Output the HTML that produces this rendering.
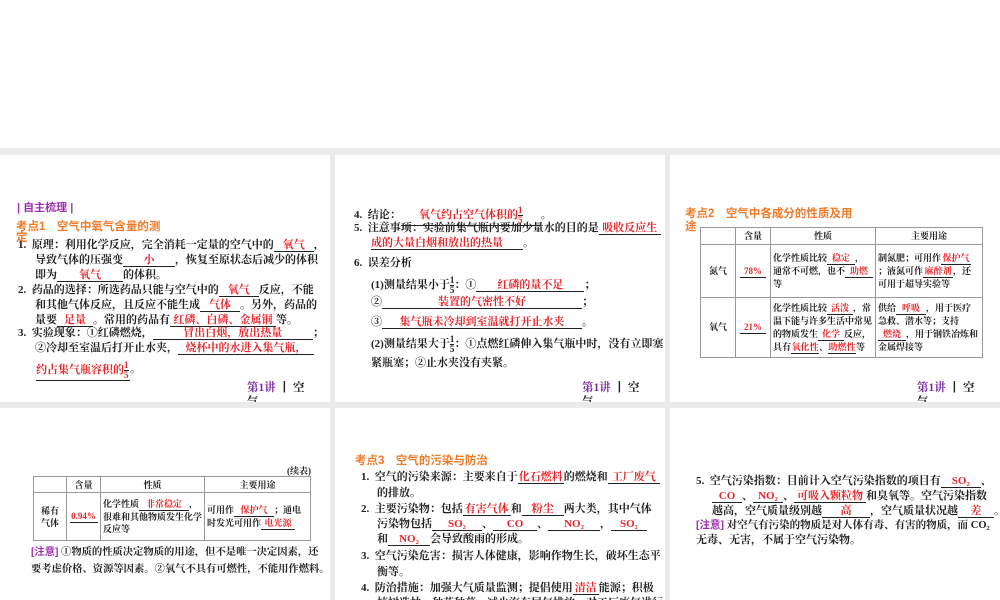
<!DOCTYPE html>
<html><head><meta charset="utf-8">
<style>
*{margin:0;padding:0;box-sizing:border-box}
body{width:1000px;height:600px;background:#fff;position:relative;overflow:hidden;font-family:"Liberation Serif","Noto Serif CJK SC",serif;font-size:11px;color:#222;font-weight:bold}
.bg{position:absolute;left:0;top:148px;width:1000px;height:452px;background:#ebebeb}
.p{position:absolute;background:#fff;overflow:hidden}
.l{position:absolute;white-space:nowrap;line-height:14px}
.b{display:inline-block;border-bottom:1px solid #222;text-align:center;color:#e8262a;line-height:12px}
.r{color:#e8262a}
.t{color:#f07a28;font-family:"Liberation Sans","Noto Sans CJK SC",sans-serif;font-size:11.5px}
.pu{color:#a030b0;font-family:"Liberation Sans","Noto Sans CJK SC",sans-serif}
.f{position:absolute;font-size:11.5px;color:#7a2aa8;white-space:nowrap}
.f span{color:#222}
.fr{display:inline-flex;flex-direction:column;vertical-align:middle;font-size:9px;line-height:9px;text-align:center}
.fr i{font-style:normal;border-bottom:1px solid #222}
table{position:absolute;border-collapse:collapse;font-size:9px;table-layout:fixed}
td{border:1px solid #999;padding:0 2px;line-height:13px;overflow:hidden}
td.c{text-align:center}
.t4 td{line-height:12px}
</style></head><body>
<div class="bg"></div>

<!-- Panel 1 -->
<div class="p" style="left:0;top:155px;width:330px;height:247px">
 <div class="l pu" style="left:17px;top:46px">| 自主梳理 |</div>
 <div class="l t" style="left:16px;top:65px">考点1　空气中氧气含量的测</div>
 <div class="l t" style="left:16px;top:76px">定</div>
 <div class="l" style="left:18px;top:83px">1.&nbsp; 原理：利用化学反应，完全消耗一定量的空气中的<span class="b" style="width:40px">氧气</span>，</div>
 <div class="l" style="left:35px;top:98px">导致气体的压强变<span class="b" style="width:52px">小</span>，恢复至原状态后减少的体积</div>
 <div class="l" style="left:35px;top:113px">即为<span class="b" style="width:66px">氧气</span>的体积。</div>
 <div class="l" style="left:18px;top:128px">2.&nbsp; 药品的选择：所选药品只能与空气中的<span class="b" style="width:40px">氧气</span>反应，不能</div>
 <div class="l" style="left:35px;top:143px">和其他气体反应，且反应不能生成<span class="b" style="width:40px">气体</span>。另外，药品的</div>
 <div class="l" style="left:35px;top:158px">量要<span class="b" style="width:36px">足量</span>。常用的药品有<span class="b" style="width:106px">红磷、白磷、金属铜</span>等。</div>
 <div class="l" style="left:18px;top:171px">3.&nbsp; 实验现象：①红磷燃烧，<span class="b" style="width:160px">冒出白烟，放出热量</span>；</div>
 <div class="l" style="left:35px;top:186px">②冷却至室温后打开止水夹，<span class="b" style="width:136px">烧杯中的水进入集气瓶，</span></div>
 <div class="l r" style="left:36px;top:206px;border-bottom:1px solid #222;width:94px">约占集气瓶容积的<span class="fr"><i>1</i>5</span></div>
 <div class="l" style="left:130px;top:207px">。</div>
 <div class="f" style="left:247px;top:224px">第1讲 <span>┃ 空</span></div>
 <div class="f" style="left:247px;top:238px"><span>气</span></div>
</div>

<!-- Panel 2 -->
<div class="p" style="left:335px;top:155px;width:330px;height:247px">
 <div class="l" style="left:19px;top:51px">4.&nbsp; 结论：<span class="b" style="width:140px">氧气约占空气体积的<span class="fr" style="color:#e8262a"><i>1</i>5</span></span>。</div>
 <div class="l" style="left:19px;top:66px">5.&nbsp; 注意事项：实验前集气瓶内要加少量水的目的是<span class="b" style="width:62px">吸收反应生</span></div>
 <div class="l" style="left:36px;top:81px"><span class="b" style="width:152px;text-align:left">成的大量白烟和放出的热量</span>。</div>
 <div class="l" style="left:19px;top:101px">6.&nbsp; 误差分析</div>
 <div class="l" style="left:36px;top:121px">(1)测量结果小于<span class="fr"><i>1</i>5</span>：①<span class="b" style="width:108px">红磷的量不足</span>；</div>
 <div class="l" style="left:36px;top:140px">②<span class="b" style="width:200px">装置的气密性不好</span>；</div>
 <div class="l" style="left:36px;top:160px">③<span class="b" style="width:200px">集气瓶未冷却到室温就打开止水夹</span>。</div>
 <div class="l" style="left:36px;top:180px">(2)测量结果大于<span class="fr"><i>1</i>5</span>：①点燃红磷伸入集气瓶中时，没有立即塞</div>
 <div class="l" style="left:36px;top:201px">紧瓶塞；②止水夹没有夹紧。</div>
 <div class="f" style="left:247px;top:224px">第1讲 <span>┃ 空</span></div>
 <div class="f" style="left:247px;top:238px"><span>气</span></div>
</div>

<!-- Panel 3 -->
<div class="p" style="left:670px;top:155px;width:330px;height:247px">
 <div class="l t" style="left:15px;top:52px">考点2　空气中各成分的性质及用</div>
 <div class="l t" style="left:15px;top:65px">途</div>
 <table style="left:30px;top:72px;width:283px">
  <colgroup><col style="width:35px"><col style="width:35px"><col style="width:105px"><col></colgroup>
  <tr style="height:17px"><td></td><td class="c">含量</td><td class="c">性质</td><td class="c">主要用途</td></tr>
  <tr style="height:53px"><td class="c">氮气</td><td class="c"><span class="b" style="width:26px">78%</span></td><td>化学性质比较<span class="b" style="width:28px">稳定</span>，通常不可燃，也不<span class="b" style="width:28px">助燃</span>等</td><td>制氮肥；可用作<span class="b" style="width:30px">保护气</span>；液氮可作<span class="b" style="width:30px">麻醉剂</span>，还可用于超导实验等</td></tr>
  <tr style="height:60px"><td class="c">氧气</td><td class="c"><span class="b" style="width:26px">21%</span></td><td>化学性质比较<span class="b" style="width:26px">活泼</span>，常温下能与许多生活中常见的物质发生<span class="b" style="width:26px">化学</span>反应，具有<span class="b" style="width:28px">氧化性</span>、<span class="b" style="width:28px">助燃性</span>等</td><td>供给<span class="b" style="width:30px">呼吸</span>，用于医疗急救、潜水等；支持<span class="b" style="width:28px">燃烧</span>，用于钢铁冶炼和金属焊接等</td></tr>
 </table>
 <div class="f" style="left:247px;top:224px">第1讲 <span>┃ 空</span></div>
 <div class="f" style="left:247px;top:238px"><span>气</span></div>
</div>

<!-- Panel 4 -->
<div class="p" style="left:0;top:408px;width:330px;height:192px">
 <div class="l" style="left:287px;top:56px;font-size:9px;font-weight:bold">(续表)</div>
 <table class="t4" style="left:33px;top:68px;width:278px">
  <colgroup><col style="width:33px"><col style="width:34px"><col style="width:104px"><col></colgroup>
  <tr style="height:16px"><td></td><td class="c">含量</td><td class="c">性质</td><td class="c">主要用途</td></tr>
  <tr style="height:48px"><td class="c">稀有<br>气体</td><td class="c"><span class="b" style="width:28px">0.94%</span></td><td>化学性质<span class="b" style="width:50px">非常稳定</span>，很难和其他物质发生化学反应等</td><td>可用作<span class="b" style="width:40px">保护气</span>；通电时发光可用作<span class="b" style="width:34px">电光源</span></td></tr>
 </table>
 <div class="l" style="left:31px;top:138px;font-size:10.3px"><span class="pu">[注意]</span> ①物质的性质决定物质的用途，但不是唯一决定因素，还</div>
 <div class="l" style="left:31px;top:155px;font-size:10.3px">要考虑价格、资源等因素。②氧气不具有可燃性，不能用作燃料。</div>
</div>

<!-- Panel 5 -->
<div class="p" style="left:335px;top:408px;width:330px;height:192px">
 <div class="l t" style="left:20px;top:46px">考点3　空气的污染与防治</div>
 <div class="l" style="left:26px;top:62px">1.&nbsp; 空气的污染来源：主要来自于<span class="b" style="width:46px">化石燃料</span>的燃烧和<span class="b" style="width:52px">工厂废气</span></div>
 <div class="l" style="left:42px;top:78px">的排放。</div>
 <div class="l" style="left:26px;top:94px">2.&nbsp; 主要污染物：包括<span class="b" style="width:48px">有害气体</span>和<span class="b" style="width:42px">粉尘</span>两大类，其中气体</div>
 <div class="l" style="left:42px;top:109px">污染物包括<span class="b" style="width:50px">SO₂</span>、<span class="b" style="width:44px">CO</span>、<span class="b" style="width:52px">NO₂</span>，<span class="b" style="width:36px">SO₂</span></div>
 <div class="l" style="left:42px;top:124px">和<span class="b" style="width:42px">NO₂</span>会导致酸雨的形成。</div>
 <div class="l" style="left:26px;top:141px">3.&nbsp; 空气污染危害：损害人体健康，影响作物生长，破坏生态平</div>
 <div class="l" style="left:42px;top:157px">衡等。</div>
 <div class="l" style="left:26px;top:173px">4.&nbsp; 防治措施：加强大气质量监测；提倡使用<span class="b" style="width:26px">清洁</span>能源；积极</div>
 <div class="l" style="left:42px;top:188px">植树造林、种花种草，减少汽车尾气排放，对工厂废气进行</div>
</div>

<!-- Panel 6 -->
<div class="p" style="left:670px;top:408px;width:330px;height:192px">
 <div class="l" style="left:26px;top:66px">5.&nbsp; 空气污染指数：目前计入空气污染指数的项目有<span class="b" style="width:40px">SO₂</span>、</div>
 <div class="l" style="left:42px;top:81px"><span class="b" style="width:30px">CO</span>、<span class="b" style="width:30px">NO₂</span>、<span class="b" style="width:72px">可吸入颗粒物</span>和臭氧等。空气污染指数</div>
 <div class="l" style="left:42px;top:96px">越高，空气质量级别越<span class="b" style="width:48px">高</span>，空气质量状况越<span class="b" style="width:36px">差</span>。</div>
 <div class="l" style="left:26px;top:110px;font-size:10.5px"><span class="pu">[注意]</span> 对空气有污染的物质是对人体有毒、有害的物质，而 CO₂</div>
 <div class="l" style="left:26px;top:125px">无毒、无害，不属于空气污染物。</div>
</div>
</body></html>
